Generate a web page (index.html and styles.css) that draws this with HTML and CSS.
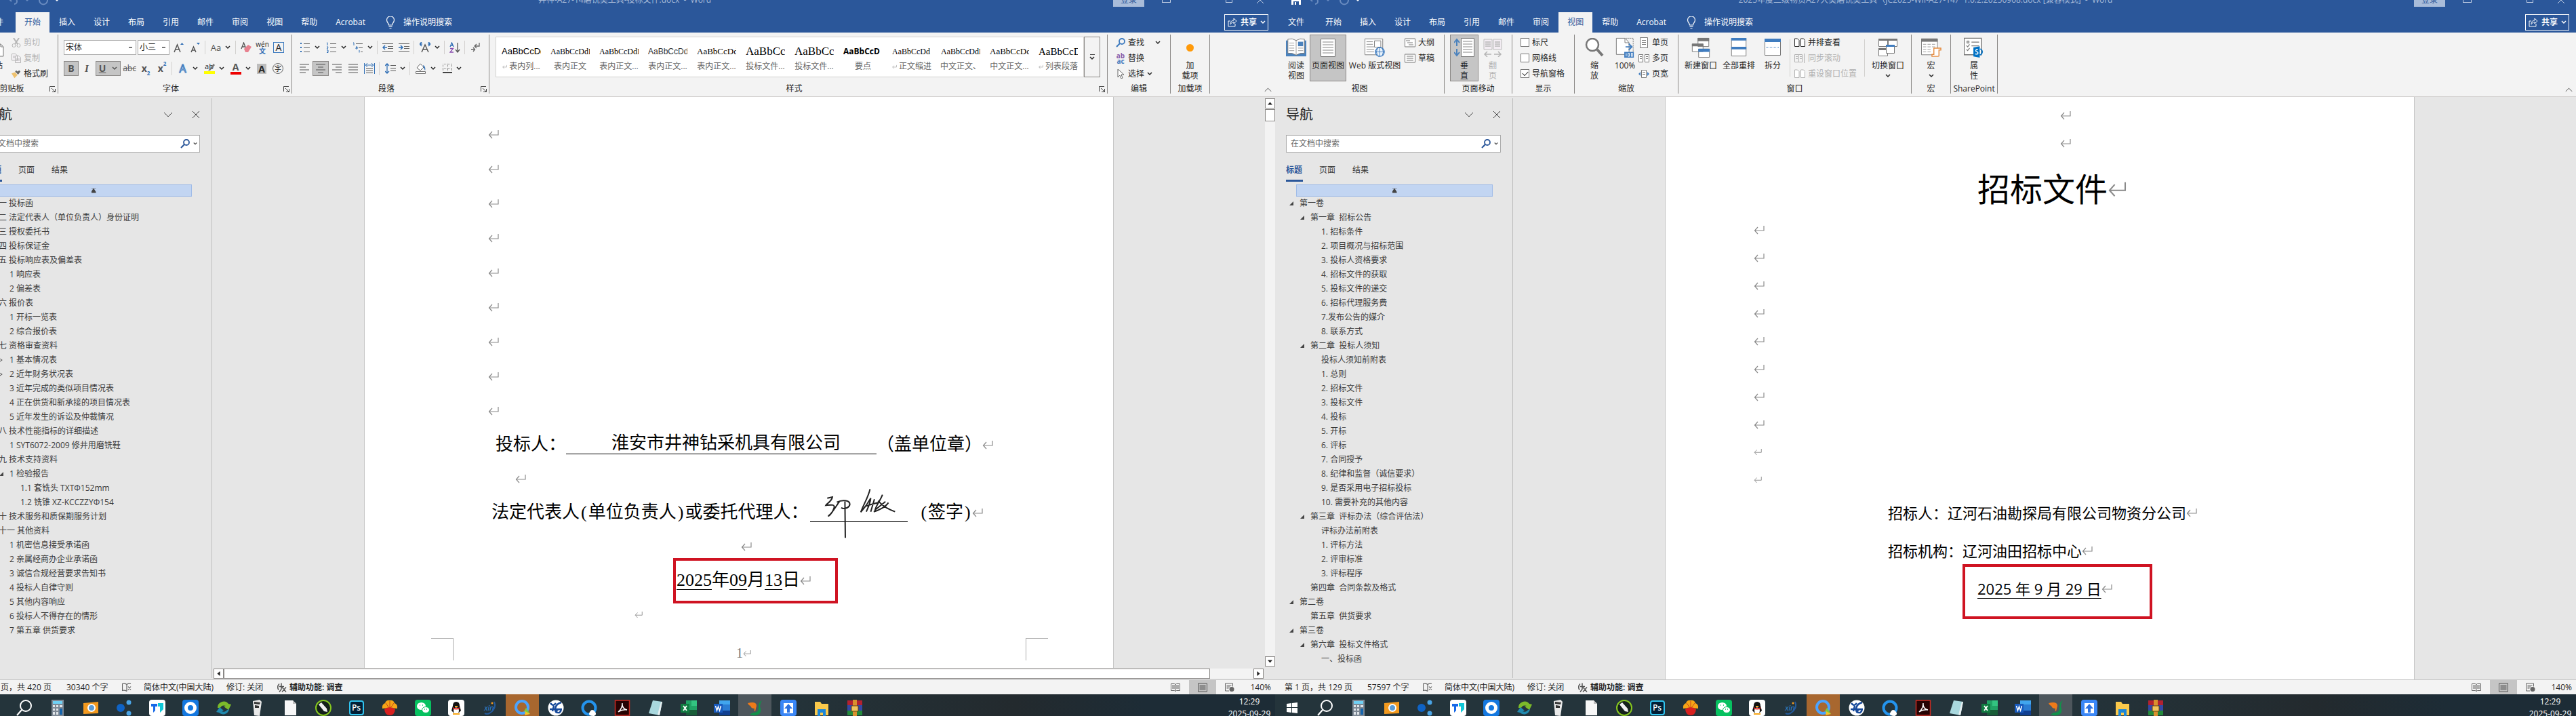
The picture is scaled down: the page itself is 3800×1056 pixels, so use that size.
FILE: index.html
```html
<!DOCTYPE html>
<html lang="zh-CN">
<head>
<meta charset="utf-8">
<title>Word</title>
<link rel="stylesheet" href="styles.css">
</head>
<body>
<svg class="defs" aria-hidden="true">
<symbol id="ret" viewBox="0 0 16 14"><path d="M15 1v7H2M6 3L1.500 8 6 13" fill="none" stroke="#8a8a8a" stroke-width="1.200"/></symbol>
<symbol id="caret" viewBox="0 0 8 6"><path d="M1 1l3 3 3-3" fill="none" stroke="currentColor" stroke-width="1.500"/></symbol>
<symbol id="chev" viewBox="0 0 14 8"><path d="M1 1l6 6 6-6" fill="none" stroke="currentColor"/></symbol>
<symbol id="close" viewBox="0 0 12 12"><path d="M1 1l10 10M11 1L1 11" fill="none" stroke="currentColor"/></symbol>
<symbol id="launch" viewBox="0 0 9 9"><path d="M.5 8V.5H8M3 3l5 5M8.500 4v4.500H4" fill="none" stroke="#444"/></symbol>
<symbol id="undo" viewBox="0 0 16 14"><path d="M2 5h7a4 4 0 0 1 0 8M5 1L1 5l4 4" fill="none" stroke="currentColor" stroke-width="2"/></symbol>
<symbol id="redo" viewBox="0 0 16 14"><path d="M12 3a6 6 0 1 1-8 0" fill="none" stroke="currentColor" stroke-width="2"/></symbol>
<symbol id="save" viewBox="0 0 14 14"><path d="M0 0h14v14H0z" fill="#fff"/><path d="M3 1h8v5H3zM3 9h8v5H3z" fill="#2b579a"/><path d="M5 10h2v4H5z" fill="#fff"/></symbol>
<symbol id="bulb" viewBox="0 0 14 18"><path d="M4.500 13c0-3-3-4-3-7.500a5.500 5.500 0 0 1 11 0C12.500 9 9.500 10 9.500 13zM4.500 15.500h5M5.500 17.500h3" fill="none" stroke="#fff" stroke-width="1.200"/></symbol>
<symbol id="share" viewBox="0 0 14 14"><path d="M4 5H1v8h10V9M4 10c0-4 2-6 5-6V1l4 4-4 4V6.500C7 6.500 5 8 4 10z" fill="none" stroke="#fff"/></symbol>
<symbol id="mag" viewBox="0 0 14 14"><circle cx="9" cy="5" r="4" fill="none" stroke="currentColor" stroke-width="1.800"/><path d="M6 8l-5 5" stroke="currentColor" stroke-width="2.200"/></symbol>
<symbol id="paste" viewBox="0 0 30 30"><path d="M1 3h21v22H1z" fill="#efc26f"/><path d="M7 1h9v5H7z" fill="#777"/><path d="M13 10h11l4 4v14H13z" fill="#fff" stroke="#777"/><path d="M24 10v4h4" fill="none" stroke="#777"/></symbol>
<symbol id="cut" viewBox="0 0 14 14"><path d="M3 0l6 9M11 0L5 9" stroke="#b5b5b5" stroke-width="2"/><circle cx="3.500" cy="11" r="2.500" fill="none" stroke="#b5b5b5"/><circle cx="10.500" cy="11" r="2.500" fill="none" stroke="#b5b5b5"/></symbol>
<symbol id="copy" viewBox="0 0 14 14"><path d="M.5.5H6L8.500 3v7h-8zM5.500 3.500H11L13.500 6v7.500h-8z" fill="#f6f3f6" stroke="#b5b5b5"/><path d="M2 4h3M2 6h3M7 8h5M7 10h5" stroke="#b5b5b5"/></symbol>
<symbol id="brush" viewBox="0 0 16 14"><path d="M0 6l6-2 4 5-5 5z" fill="#efc26f"/><path d="M6 3l5 5 1.500-1.500L15 3l-2-2-3 2L8 1z" fill="#666"/></symbol>
<symbol id="grow" viewBox="0 0 16 16"><path d="M1 15L5.500 4 10 15M3 11h5" fill="none" stroke="#555" stroke-width="1.500"/><path d="M10 4l2.500-3L15 4z" fill="#2f6eb5"/></symbol>
<symbol id="shrink" viewBox="0 0 16 16"><path d="M2 15L5.500 7 9 15M3.500 12h4" fill="none" stroke="#555" stroke-width="1.500"/><path d="M10 1l2.500 3L15 1z" fill="#2f6eb5"/></symbol>
<symbol id="erase" viewBox="0 0 16 16"><path d="M1 10L4.500 1 8 10M2 7h5" fill="none" stroke="#555" stroke-width="1.300"/><path d="M5 10l6-6 5 3-5 8H7z" fill="#e8818f"/></symbol>
<symbol id="bul" viewBox="0 0 16 16"><path d="M1 1h2v2H1zM1 7h2v2H1zM1 13h2v2H1z" fill="#2f6eb5"/><path d="M6 2.500h9M6 8.500h9M6 14.500h9" stroke="#666"/></symbol>
<symbol id="num" viewBox="0 0 16 16"><path d="M1 1h1v4M1 7h2v1L1 10h2M1 12h2v3.500H1M2 14h1" fill="none" stroke="#2f6eb5"/><path d="M6 2.500h9M6 8.500h9M6 14.500h9" stroke="#666"/></symbol>
<symbol id="multi" viewBox="0 0 16 16"><path d="M1 1h1v4M5 7h2v3H5V8.500h2M10 12v3.500" fill="none" stroke="#2f6eb5"/><path d="M5 2.500h10M9 8.500h6M12 14.500h3" stroke="#666"/></symbol>
<symbol id="outd" viewBox="0 0 16 14"><path d="M0 1.500h16M8 5.500h8M8 8.500h8M0 12.500h16" stroke="#666"/><path d="M7 7H1M4 4L1 7l3 3" fill="none" stroke="#2f6eb5" stroke-width="1.500"/></symbol>
<symbol id="ind" viewBox="0 0 16 14"><path d="M0 1.500h16M8 5.500h8M8 8.500h8M0 12.500h16" stroke="#666"/><path d="M0 7h6M3 4l3 3-3 3" fill="none" stroke="#2f6eb5" stroke-width="1.500"/></symbol>
<symbol id="acs" viewBox="0 0 16 16"><path d="M3 15L8 4l5 11M5 11h6" fill="none" stroke="#555" stroke-width="1.500"/><path d="M3 0L0 3l3 3M13 0l3 3-3 3M0 3h4M12 3h4" fill="none" stroke="#2f6eb5" stroke-width="1.500"/></symbol>
<symbol id="sort" viewBox="0 0 16 16"><path d="M1 7l2.500-6L6 7M2 5h3" fill="none" stroke="#2f6eb5" stroke-width="1.300"/><path d="M1 9.500h4.500L1 15h5" fill="none" stroke="#8a4fb0" stroke-width="1.300"/><path d="M12 1v13M9 11l3 4 3-4" fill="none" stroke="#555" stroke-width="1.300"/></symbol>
<symbol id="marks" viewBox="0 0 14 14"><path d="M13 0v5H7M9 2L6 5l3 3M1 10h5M4 7l2.500 3L4 13" fill="none" stroke="#666" stroke-width="1.300"/></symbol>
<symbol id="al" viewBox="0 0 16 13"><path d="M1 .5h14M1 4.500h9M1 8.500h14M1 12.500h9" stroke="#555"/></symbol>
<symbol id="ac" viewBox="0 0 16 13"><path d="M1 .5h14M4 4.500h8M1 8.500h14M4 12.500h8" stroke="#555"/></symbol>
<symbol id="ar" viewBox="0 0 16 13"><path d="M1 .5h14M6 4.500h9M1 8.500h14M6 12.500h9" stroke="#555"/></symbol>
<symbol id="aj" viewBox="0 0 16 13"><path d="M1 .5h14M1 4.500h14M1 8.500h14M1 12.500h14" stroke="#555"/></symbol>
<symbol id="ad" viewBox="0 0 16 16"><path d="M.5 0v16M15.500 0v16M2 3h12M5 0L2 3l3 3M11 0l3 3-3 3" fill="none" stroke="#2f6eb5"/><path d="M3 8.500h10M3 11.500h10M3 14.500h10" stroke="#555"/></symbol>
<symbol id="ls" viewBox="0 0 16 16"><path d="M3 1v14M0 4l3-3 3 3M0 12l3 3 3-3" fill="none" stroke="#2f6eb5" stroke-width="1.300"/><path d="M8 3.500h8M8 7.500h8M8 11.500h8" stroke="#555"/></symbol>
<symbol id="fill" viewBox="0 0 16 16"><path d="M7 1L2 7l5 4 5-5-5-5z" fill="#fff" stroke="#666"/><path d="M11 3c3 1 4 5 3 8l-2-4z" fill="#3f7cbf"/><path d="M.5 12.500h14v3H.5z" fill="#fff" stroke="#777"/></symbol>
<symbol id="bord" viewBox="0 0 14 14"><path d="M.5 0v13M7.500 0v13M13.500 0v13M0 .5h14M0 7.500h14" stroke="#888" stroke-dasharray="1 1"/><path d="M0 13h14" stroke="#444" stroke-width="2"/></symbol>
<symbol id="hil" viewBox="0 0 16 16"><path d="M6 11L14 1l2 2-7 8z" fill="#777"/><path d="M0 12h16v4H0z" fill="#ff0"/></symbol>
<symbol id="cursor" viewBox="0 0 14 14"><path d="M3 0v12l3-3 2 5 2-1-2-5h4z" fill="#fff" stroke="#666"/></symbol>
<symbol id="v-read" viewBox="0 0 32 28"><path d="M0 3h32v25H0z" fill="#4a82bd"/><path d="M3 1q7-2 13 2 6-4 13-2v22q-7-1-13 3-6-4-13-3z" fill="#fff" stroke="#777"/><path d="M16 3v22M5 7h8M5 11h8M5 15h8M5 19h8M19 15h8M19 19h8" stroke="#999"/><path d="M19 5h8v7h-8z" fill="#4a82bd"/></symbol>
<symbol id="v-page" viewBox="0 0 22 28"><path d="M.5 1.500h21v26H.5z" fill="#fff" stroke="#777"/><path d="M3 6h16M3 10h16M3 14h16M3 18h16M3 22h16" stroke="#888"/></symbol>
<symbol id="v-web" viewBox="0 0 32 30"><path d="M.5 1.500h28v25H.5z" fill="#fff" stroke="#777"/><path d="M3 6h10M3 10h10M3 14h12M3 18h12M3 22h12" stroke="#888"/><path d="M15.500 4.500h10v10h-10z" fill="#fff" stroke="#777"/><circle cx="24" cy="22" r="7" fill="#eaf3fb" stroke="#3f7cbf" stroke-width="1.500"/><path d="M17 22h14M24 15v14M20 17q-3 5 0 10M28 17q3 5 0 10" fill="none" stroke="#3f7cbf"/></symbol>
<symbol id="v-out" viewBox="0 0 16 13"><path d="M.5.5h15v12H.5z" fill="#fff" stroke="#777"/><path d="M2 3.500h6M4 6.500h8M6 9.500h7" stroke="#777"/></symbol>
<symbol id="v-draft" viewBox="0 0 16 13"><path d="M.5.5h15v12H.5z" fill="#fff" stroke="#777"/><path d="M3 3.500h10M3 6.500h10M3 9.500h10" stroke="#777"/></symbol>
<symbol id="v-vert" viewBox="0 0 30 28"><path d="M10.500.5h19v27h-19z" fill="#fff" stroke="#777"/><path d="M13 5h14M13 9h14M13 13h14M13 17h14M13 21h14" stroke="#888"/><path d="M4 12V3M0 7l4-5 4 5M4 16v9M0 21l4 5 4-5" fill="none" stroke="#4a82bd" stroke-width="2"/></symbol>
<symbol id="v-side" viewBox="0 0 28 28"><path d="M1 2h12v15H1zM15 2h12v15H15z" fill="#f3edf3" stroke="#bbb"/><path d="M3 6h8M3 9h8M3 12h8M17 6h8M17 9h8M17 12h8M2 24h10M16 24h10M6 20l-4 4 4 4M22 20l4 4-4 4" fill="none" stroke="#b5b5b5" stroke-width="1.500"/></symbol>
<symbol id="v-zoom" viewBox="0 0 28 28"><circle cx="11" cy="10" r="9" fill="#fff" stroke="#777" stroke-width="2.500"/><path d="M18 17l8 9" stroke="#777" stroke-width="4"/></symbol>
<symbol id="v-100" viewBox="0 0 28 32"><path d="M.5 1.500h14l6 7V27H.5z" fill="#fff" stroke="#777"/><path d="M14 1.500v7h6" fill="none" stroke="#777"/><path d="M16 1.500h11v22" fill="none" stroke="#777" stroke-dasharray="2 1"/><path d="M15 15h10M20 10l5 5-5 5" fill="none" stroke="#3f7cbf" stroke-width="2"/><path d="M13 23h15v9H13z" fill="#3f7cbf"/><path d="M16 25v5M19 25h2v5h-2zM24 25h2v5h-2z" fill="none" stroke="#fff"/></symbol>
<symbol id="v-one" viewBox="0 0 16 16"><path d="M2.500.5h11v15h-11z" fill="#fff" stroke="#777"/><path d="M5 4.500h6M5 7.500h6M5 10.500h6" stroke="#777"/></symbol>
<symbol id="v-many" viewBox="0 0 16 12"><path d="M.5.500h6v11h-6zM9.500.500h6v11h-6z" fill="#fff" stroke="#777"/><path d="M2 3.500h3M2 6.500h3M11 3.500h3M11 6.500h3" stroke="#777"/></symbol>
<symbol id="v-width" viewBox="0 0 16 12"><path d="M4.500.5h7v11h-7z" fill="#fff" stroke="#777"/><path d="M6 3.500h4M6 6.500h4" stroke="#777"/><path d="M3 3v6L0 6zM13 3v6l3-3z" fill="#3f7cbf"/></symbol>
<symbol id="v-new" viewBox="0 0 28 32"><path d="M9.500 1.500h17v13h-17zM.5 10.500h17v12H.5zM10.500 18.500h17v13h-17z" fill="#fff" stroke="#777"/><path d="M9 1h18v5H9zM0 10h18v4H0z" fill="#777"/><path d="M10 18h18v5H10z" fill="#3f7cbf"/></symbol>
<symbol id="v-all" viewBox="0 0 24 30"><path d="M.5.5h23v28H.5z" fill="#fff" stroke="#777"/><path d="M0 0h24v4H0zM0 14h24v4H0z" fill="#3f7cbf"/></symbol>
<symbol id="v-split" viewBox="0 0 24 26"><path d="M.5.5h23v24H.5z" fill="#fff" stroke="#777"/><path d="M0 0h24v5H0z" fill="#3f7cbf"/><path d="M2 13h20" stroke="#3f7cbf" stroke-dasharray="1 1"/></symbol>
<symbol id="v-side2" viewBox="0 0 16 13"><path d="M.5.5h4L7 3v9H.5zM9.500.5h4L15.500 3v9h-6z" fill="#fff" stroke="currentColor"/></symbol>
<symbol id="v-sync" viewBox="0 0 16 14"><path d="M.5 1.500h6v11h-6zM6.500 1.500h5v11h-5M14.500 0v14" fill="none" stroke="currentColor"/><path d="M2 4.500h3M2 7.500h3M8 4.500h3M8 7.500h3" stroke="currentColor"/></symbol>
<symbol id="v-sw" viewBox="0 0 28 28"><path d="M.5 1.500h13v11H.5zM14.500 1.500h13v11h-13zM.5 15.500h13v11H.5z" fill="#fff" stroke="#777"/><path d="M0 1h28v3H0zM0 15h13v3H0z" fill="#777"/><path d="M11.500 10.500h12v12h-12z" fill="#fff" stroke="#777"/><path d="M11 10h13v3H11z" fill="#3f7cbf"/></symbol>
<symbol id="v-macro" viewBox="0 0 32 30"><path d="M.5 1.500h25v25H.5z" fill="#fff" stroke="#777"/><path d="M0 1h26v5H0z" fill="#777"/><path d="M3 10h20M3 14h20M3 18h14M3 22h14" stroke="#999" stroke-dasharray="5 2"/><path d="M20 16h11v3h-3v9q0 1-2 1H17v-3h3z" fill="#fff" stroke="#e58b3e" stroke-width="1.500"/></symbol>
<symbol id="v-sp" viewBox="0 0 32 32"><path d="M.5 1.500h27v26H.5z" fill="#fff" stroke="#777" stroke-width="1.500"/><path d="M5 6h3v3H5zM12 7.500h12M12 13.500h12M4 13l2 2 3-4M4 19l2 2 3-4" fill="none" stroke="#777" stroke-width="1.300"/><path d="M15 16l10-2v18l-10-2z" fill="#0072c6"/><path d="M26 18q6 5 0 10" fill="none" stroke="#0072c6" stroke-width="2"/><path d="M22 19q-4 0-3 3 4 1 3 4-2 1-4 0" fill="none" stroke="#fff" stroke-width="1.500"/></symbol>
<symbol id="book" viewBox="0 0 14 13"><path d="M7 2v10M7 2Q4 0 .5 1v10Q4 10 7 12M7 2q3-2 6-1M9 5l4 5M13 5l-4 5" fill="none" stroke="#666" stroke-width="1.200"/></symbol>
<symbol id="acc" viewBox="0 0 16 15"><path d="M4 2Q0 6 3 11M7 1v9L4 14M4 6h7M8 7l6 7M14 7l-6 7" fill="none" stroke="#555" stroke-width="1.500"/></symbol>
<symbol id="s-read" viewBox="0 0 14 13"><path d="M7 2v10M.5 1h5L7 2l1.500-1h5v10h-5L7 12l-1.500-1h-5zM2 3.500h4M2 5.500h4M2 7.500h4M8 3.500h4M8 5.500h4M8 7.500h4" fill="none" stroke="#666"/></symbol>
<symbol id="s-page" viewBox="0 0 14 13"><path d="M.5.5h13v12H.5zM2.500 3.500h9M2.500 5.500h9M2.500 7.500h9M2.500 9.500h9" fill="none" stroke="#555"/></symbol>
<symbol id="s-web" viewBox="0 0 14 13"><path d="M6 11.500H.5V.5h11V5M2.500 3.500h7M2.500 5.500h5M2.500 7.500h3" fill="none" stroke="#666"/><circle cx="10" cy="9" r="3.500" fill="#666"/></symbol>
<symbol id="t-win" viewBox="0 0 24 24"><path d="M4 6l7-1v6H4zM12 5l8-1v7h-8zM4 12h7v7l-7-1zM12 12h8v8l-8-1z" fill="#fff"/></symbol>
<symbol id="t-mag" viewBox="0 0 24 24"><circle cx="14" cy="9" r="8" fill="none" stroke="#fff" stroke-width="2"/><path d="M8 15l-7 8" stroke="#fff" stroke-width="2"/></symbol>
<symbol id="t-calc" viewBox="0 0 24 24"><path d="M3 0h18v24H3z" fill="#7d8894"/><path d="M5 2h14v4H5z" fill="#6fd0f4"/><path d="M5 8h3v3H5zM10 8h3v3h-3zM15 8h4v3h-4zM5 13h3v3H5zM10 13h3v3h-3zM5 18h3v4H5zM10 18h3v4h-3z" fill="#dfe4e8"/><path d="M15 13h4v9h-4z" fill="#1565ad"/></symbol>
<symbol id="t-cam" viewBox="0 0 24 24"><path d="M1 5l22-2v17l-22 1z" fill="#f39a1f"/><circle cx="13" cy="12" r="6" fill="#fff"/><circle cx="13" cy="12" r="4" fill="#5b9bd5"/></symbol>
<symbol id="t-dots" viewBox="0 0 24 24"><circle cx="7" cy="12" r="6" fill="#0f63c5"/><circle cx="19" cy="4" r="3.500" fill="#4aa4e6"/><circle cx="19" cy="20" r="3.500" fill="#4aa4e6"/></symbol>
<symbol id="t-dd" viewBox="0 0 24 24"><rect width="24" height="24" rx="4" fill="#fff"/><path d="M3 6h9v4H9v6l-3 3V10H3z" fill="#1668e8"/><path d="M13 5h8v9l-5 5v-9h-3z" fill="#10c7d8"/></symbol>
<symbol id="t-blue" viewBox="0 0 24 24"><rect width="24" height="24" rx="4" fill="#1478e0"/><circle cx="12" cy="12" r="6.500" fill="none" stroke="#fff" stroke-width="5"/><path d="M12 9l2 3-2 3-2-3z" fill="#1478e0"/></symbol>
<symbol id="t-sync" viewBox="0 0 24 24"><path d="M3 12a9 9 0 0 1 16-6l4 1-4 8-7-5 3-1a6 6 0 0 0-8 3z" fill="#7cba2a"/><path d="M20 14a9 9 0 0 1-15 5l-4-1 5-7 6 5-3 1a6 6 0 0 0 8-2z" fill="#2189ae"/></symbol>
<symbol id="t-tower" viewBox="0 0 24 24"><path d="M6 2l10-2 3 3-3 21-8-1z" fill="#e9e9e9"/><path d="M8 3l9 1-1 3-8-1zM9 8l6 1v3H9z" fill="#333"/></symbol>
<symbol id="t-file" viewBox="0 0 24 24"><path d="M4 1h12l5 5v17H4z" fill="#f7f7f7"/><path d="M16 1v5h5" fill="#bbb"/></symbol>
<symbol id="t-pen" viewBox="0 0 24 24"><circle cx="12" cy="12" r="11" fill="#14201a" stroke="#86c81f" stroke-width="2"/><path d="M5 7l4-3 8 9 1 5-5-1z" fill="#f0f0f0"/></symbol>
<symbol id="t-sun" viewBox="0 0 24 24"><path d="M12 12L1 13Q0 7 5 5q2-5 7-4 5-1 7 4 5 2 4 8z" fill="#f6a516"/><path d="M4 14q8-6 16 0-1 9-8 9t-8-9z" fill="#d8201f"/><path d="M12 2v9M6 5l5 7M18 5l-5 7" stroke="#c8441c"/></symbol>
<symbol id="t-wx" viewBox="0 0 24 24"><rect width="24" height="24" rx="4" fill="#07c160"/><ellipse cx="9.500" cy="9.500" rx="6.500" ry="5.500" fill="#fff"/><ellipse cx="16" cy="15" rx="5.500" ry="4.500" fill="#fff" stroke="#07c160"/><path d="M7 8h1M11 8h1M14 14h1M17 14h1" stroke="#07c160" stroke-width="1.500"/></symbol>
<symbol id="t-qq" viewBox="0 0 24 24"><rect width="24" height="24" rx="4" fill="#fff"/><path d="M7 9q0-6 5-6t5 6l2 7-3 3H8l-3-3z" fill="#111"/><ellipse cx="12" cy="16" rx="4" ry="4.500" fill="#fff"/><path d="M7 11q5 3 10 0v2q-5 3-10 0z" fill="#e52420"/><path d="M7 20h10v2H7zM10 9h4v2h-4z" fill="#f6a516"/></symbol>
<symbol id="t-swirl" viewBox="0 0 24 24"><path d="M20 3q4 10-7 17-4 2-7 0" fill="none" stroke="#245a9c" stroke-width="2"/><circle cx="17" cy="5" r="1.500" fill="#f39a1f"/></symbol>
<symbol id="t-q" viewBox="0 0 24 24"><circle cx="11" cy="11" r="9" fill="none" stroke="#4ba3ff" stroke-width="4"/><path d="M17 12l6 9h-5l-4-4z" fill="#7ac943"/><path d="M16 17l7 4-8 2z" fill="#f7c325"/></symbol>
<symbol id="t-yg" viewBox="0 0 24 24"><circle cx="12" cy="12" r="11.500" fill="#fff"/><path d="M4 5q4 6 8 0M9 9l-2 8M20 4q-8 2-9 9t6 6q5-4 0-5-4 0-4 4M3 14h18" fill="none" stroke="#174a9b" stroke-width="2.500"/></symbol>
<symbol id="t-qb" viewBox="0 0 24 24"><circle cx="12" cy="12" r="9.500" fill="none" stroke="#2494ee" stroke-width="4"/><path d="M12 20q4-9 9-2 3 4-2 6-8 0-7-4z" fill="#fff"/></symbol>
<symbol id="t-pdf" viewBox="0 0 24 24"><rect x="1.500" y="1" width="21" height="22" fill="#260303" stroke="#c92a20" stroke-width="1.500"/><path d="M6 18q6-5 6-13-1 8 7 10-7-1-13 3z" fill="none" stroke="#fff" stroke-width="1.500"/></symbol>
<symbol id="t-note" viewBox="0 0 24 24"><path d="M8 1l14 2-4 20L2 20z" fill="#a9d8de"/><path d="M20 3l2 0-4 20-3-1z" fill="#e8eef0"/></symbol>
<symbol id="t-xls" viewBox="0 0 24 24"><path d="M8 1h16v22H8z" fill="#21a366"/><path d="M16 1h8v8h-8z" fill="#33c481"/><path d="M8 15h16v8H8z" fill="#185c37"/><path d="M0 6h13v13H0z" fill="#107c41"/><path d="M4 9l5 7M9 9l-5 7" stroke="#fff" stroke-width="1.800"/></symbol>
<symbol id="t-doc" viewBox="0 0 24 24"><path d="M8 1h16v22H8z" fill="#2b7cd3"/><path d="M8 1h16v6H8z" fill="#41a5ee"/><path d="M8 16h16v7H8z" fill="#103f91"/><path d="M0 6h13v13H0z" fill="#185abd"/><path d="M2.500 9l2 7 2-6 2 6 2-7" fill="none" stroke="#fff" stroke-width="1.500"/></symbol>
<symbol id="t-leaf" viewBox="0 0 24 24"><path d="M1 5q13-3 13 4l-2 8q-2 0-1-4-5 0-6-4-3-1-4-4z" fill="#ee7a1a"/><path d="M22 1q-6 3-5 11 0 7-7 7-3 0-6 3 8 3 14-1 4-4 1-11 0-5 3-9z" fill="#12914a"/></symbol>
<symbol id="t-up" viewBox="0 0 24 24"><rect width="24" height="24" rx="4" fill="#3b87f6"/><path d="M5 5h14v15H5z" fill="#fff"/><path d="M12 6l6 7h-4v6h-4v-6H6z" fill="#2c71e0"/></symbol>
<symbol id="t-dir" viewBox="0 0 24 24"><path d="M2 3h8l2 3h10v17H2z" fill="#fbc94b"/><path d="M6 14h12v10h-4v-5h-4v5H6z" fill="#1c86d8"/></symbol>
<symbol id="t-rar" viewBox="0 0 24 24"><path d="M1 1h22v7H1z" fill="#b32130"/><path d="M1 8h22v8H1z" fill="#3647a4"/><path d="M1 16h22v7H1z" fill="#228a3a"/><path d="M9 0h6v24H9z" fill="#d9902e"/><path d="M7 9h10v8H7z" fill="#efc55c" stroke="#6d4210"/></symbol>
</svg>

<div class="desktop">
<section class="window">
<header class="titlebar">
<div class="quick"><button aria-label="保存"><svg class="i14"><use href="#save"/></svg></button><button class="dim" aria-label="撤消"><svg class="i16"><use href="#undo"/></svg></button><svg class="car dim"><use href="#caret"/></svg><button class="dim" aria-label="重复"><svg class="i16"><use href="#redo"/></svg></button><svg class="car"><use href="#caret"/></svg></div>
<h1>井神-A27-14磨铣类工具-投标文件.docx&nbsp; -&nbsp; Word</h1>
<div class="caption"><button class="login">登录</button><button class="wopt" aria-label="功能区显示选项"></button><button class="wrest" aria-label="还原"></button><button aria-label="关闭"><svg class="i12"><use href="#close"/></svg></button></div>
</header>
<nav class="tabs">
<button class="file">文件</button><button class="on">开始</button><button>插入</button><button>设计</button><button>布局</button><button>引用</button><button>邮件</button><button>审阅</button><button>视图</button><button>帮助</button><button>Acrobat</button><button class="tell"><svg><use href="#bulb"/></svg>操作说明搜索</button>
<button class="share"><svg class="i14"><use href="#share"/></svg>共享<svg class="car"><use href="#caret"/></svg></button>
</nav>
<div class="ribbon">
<div class="group clip"><div class="gbody"><button class="big w40"><span class="pic"><svg class="i30"><use href="#paste"/></svg></span><span>粘贴</span></button><div class="stack"><button class="off"><svg class="i14"><use href="#cut"/></svg>剪切</button><button class="off"><svg class="i14"><use href="#copy"/></svg>复制</button><button><svg class="i14"><use href="#brush"/></svg>格式刷</button></div></div><div class="glabel"><span>剪贴板</span><svg><use href="#launch"/></svg></div></div>
<div class="group font"><div class="gbody rows">
<div class="row"><select class="fname" aria-label="字体"><option>宋体</option></select><select class="fsize" aria-label="字号"><option>小三</option></select><button><svg class="i16"><use href="#grow"/></svg></button><button><svg class="i16"><use href="#shrink"/></svg></button><i class="sep"></i><button class="split"><span class="aa">Aa</span><svg class="car"><use href="#caret"/></svg></button><i class="sep"></i><button><svg class="i16"><use href="#erase"/></svg></button><button class="wen"><span>wén</span><b>文</b></button><button><span class="boxa">A</span></button></div>
<div class="row"><button class="press b">B</button><button class="it">I</button><button class="split press u"><u>U</u><svg class="car"><use href="#caret"/></svg></button><button class="st"><s>abc</s></button><button class="b">x<sub>2</sub></button><button class="b">x<sup>2</sup></button><i class="sep"></i><button class="split"><span class="glow">A</span><svg class="car"><use href="#caret"/></svg></button><button class="split"><span class="hl">ab<svg class="i16"><use href="#hil"/></svg></span><svg class="car"><use href="#caret"/></svg></button><button class="split"><span class="reda">A</span><svg class="car"><use href="#caret"/></svg></button><button><span class="shade">A</span></button><button><span class="circ">字</span></button></div>
</div><div class="glabel"><span>字体</span><svg><use href="#launch"/></svg></div></div>
<div class="group para"><div class="gbody rows">
<div class="row"><button class="split"><svg class="i16"><use href="#bul"/></svg><svg class="car"><use href="#caret"/></svg></button><button class="split"><svg class="i16"><use href="#num"/></svg><svg class="car"><use href="#caret"/></svg></button><button class="split"><svg class="i16"><use href="#multi"/></svg><svg class="car"><use href="#caret"/></svg></button><i class="sep"></i><button><svg class="i16"><use href="#outd"/></svg></button><button><svg class="i16"><use href="#ind"/></svg></button><i class="sep"></i><button class="split"><svg class="i16"><use href="#acs"/></svg><svg class="car"><use href="#caret"/></svg></button><i class="sep"></i><button><svg class="i16"><use href="#sort"/></svg></button><i class="sep"></i><button><svg class="i14"><use href="#marks"/></svg></button></div>
<div class="row"><button><svg class="i16"><use href="#al"/></svg></button><button class="press"><svg class="i16"><use href="#ac"/></svg></button><button><svg class="i16"><use href="#ar"/></svg></button><button><svg class="i16"><use href="#aj"/></svg></button><button><svg class="i16"><use href="#ad"/></svg></button><i class="sep"></i><button class="split"><svg class="i16"><use href="#ls"/></svg><svg class="car"><use href="#caret"/></svg></button><i class="sep"></i><button class="split"><svg class="i16"><use href="#fill"/></svg><svg class="car"><use href="#caret"/></svg></button><button class="split"><svg class="i14"><use href="#bord"/></svg><svg class="car"><use href="#caret"/></svg></button></div>
</div><div class="glabel"><span>段落</span><svg><use href="#launch"/></svg></div></div>
<div class="group styles"><div class="gbody"><div class="gallery">
<button><span class="smp sans">AaBbCcDd</span><small><svg class="mini"><use href="#ret"/></svg>表内列...</small></button>
<button><span class="smp song">AaBbCcDdE</span><small>表内正文</small></button>
<button><span class="smp song">AaBbCcDdE</span><small>表内正文...</small></button>
<button><span class="smp lite">AaBbCcDd</span><small>表内正文...</small></button>
<button><span class="smp times">AaBbCcDd</span><small>表内正文...</small></button>
<button><span class="smp large">AaBbCc</span><small>投标文件...</small></button>
<button><span class="smp large">AaBbCc</span><small>投标文件...</small></button>
<button><span class="smp heavy">AaBbCcD</span><small>要点</small></button>
<button><span class="smp song">AaBbCcDd</span><small><svg class="mini"><use href="#ret"/></svg>正文缩进</small></button>
<button><span class="smp song">AaBbCcDdE</span><small>中文正文、</small></button>
<button><span class="smp times">AaBbCcDd</span><small>中文正文...</small></button>
<button><span class="smp mid">AaBbCcD</span><small><svg class="mini"><use href="#ret"/></svg>列表段落</small></button>
</div><button class="more" aria-label="其他"><i></i><svg class="car"><use href="#caret"/></svg></button></div><div class="glabel"><span>样式</span><svg><use href="#launch"/></svg></div></div>
<div class="group edit"><div class="gbody"><div class="stack"><button class="far"><svg class="i14 blue"><use href="#mag"/></svg>查找<svg class="car"><use href="#caret"/></svg></button><button><span class="abac"><b>ab</b><b>ac</b></span>替换</button><button><svg class="i14"><use href="#cursor"/></svg>选择<svg class="car"><use href="#caret"/></svg></button></div></div><div class="glabel"><span>编辑</span></div></div>
<div class="group"><div class="gbody"><button class="big w57"><span class="pic"><i class="dot"></i></span><span>加<br>载项</span></button></div><div class="glabel"><span>加载项</span></div></div>
<button class="collapse" aria-label="折叠功能区"><svg><use href="#chev"/></svg></button>
</div>
<div class="work">
<aside class="nav">
<div class="navhead"><h2>导航</h2><button><svg class="chev"><use href="#chev"/></svg></button><button><svg class="i12"><use href="#close"/></svg></button></div>
<div class="search"><input type="text" placeholder="在文档中搜索" aria-label="在文档中搜索"><svg class="i14"><use href="#mag"/></svg><svg class="car"><use href="#caret"/></svg></div>
<div class="navtabs"><button class="on">标题</button><button>页面</button><button>结果</button></div>
<button class="jump" aria-label="跳转到开头"><i></i></button>
<ul>
<li><a href="#">一 投标函</a></li>
<li><a href="#">二 法定代表人（单位负责人）身份证明</a></li>
<li><a href="#">三 授权委托书</a></li>
<li><a href="#">四 投标保证金</a></li>
<li><a href="#">五 投标响应表及偏差表</a></li>
<li class="l2"><a href="#">1 响应表</a></li>
<li class="l2"><a href="#">2 偏差表</a></li>
<li><a href="#">六 报价表</a></li>
<li class="l2"><a href="#">1 开标一览表</a></li>
<li class="l2"><a href="#">2 综合报价表</a></li>
<li><a href="#">七 资格审查资料</a></li>
<li class="l2 shut"><a href="#">1 基本情况表</a></li>
<li class="l2 shut"><a href="#">2 近年财务状况表</a></li>
<li class="l2"><a href="#">3 近年完成的类似项目情况表</a></li>
<li class="l2"><a href="#">4 正在供货和新承接的项目情况表</a></li>
<li class="l2"><a href="#">5 近年发生的诉讼及仲裁情况</a></li>
<li><a href="#">八 技术性能指标的详细描述</a></li>
<li class="l2"><a href="#">1 SYT6072-2009 修井用磨铣鞋</a></li>
<li><a href="#">九 技术支持资料</a></li>
<li class="l2 open"><a href="#">1 检验报告</a></li>
<li class="l3"><a href="#">1.1 套铣头 TXTΦ152mm</a></li>
<li class="l3"><a href="#">1.2 铣锥 XZ-KCCZZYΦ154</a></li>
<li><a href="#">十 技术服务和质保期服务计划</a></li>
<li><a href="#">十一 其他资料</a></li>
<li class="l2"><a href="#">1 机密信息接受承诺函</a></li>
<li class="l2"><a href="#">2 亲属经商办企业承诺函</a></li>
<li class="l2"><a href="#">3 诚信合规经营要求告知书</a></li>
<li class="l2"><a href="#">4 投标人自律守则</a></li>
<li class="l2"><a href="#">5 其他内容响应</a></li>
<li class="l2"><a href="#">6 投标人不得存在的情形</a></li>
<li class="l2"><a href="#">7 第五章 供货要求</a></li>
</ul>
</aside>
<div class="canvas">
<div class="view">
<article class="page bid">
<p><svg class="ret"><use href="#ret"/></svg></p><p><svg class="ret"><use href="#ret"/></svg></p><p><svg class="ret"><use href="#ret"/></svg></p><p><svg class="ret"><use href="#ret"/></svg></p><p><svg class="ret"><use href="#ret"/></svg></p><p><svg class="ret"><use href="#ret"/></svg></p><p><svg class="ret"><use href="#ret"/></svg></p><p><svg class="ret"><use href="#ret"/></svg></p><p><svg class="ret"><use href="#ret"/></svg></p>
<p class="t who">投标人：<span class="blank name">淮安市井神钻采机具有限公司</span>（盖单位章）<svg class="ret"><use href="#ret"/></svg></p>
<p class="t in2"><svg class="ret"><use href="#ret"/></svg></p>
<p class="t rep">法定代表人<em>(</em>单位负责人<em>)</em>或委托代理人：<span class="blank sign"><svg class="ink" viewBox="1003 360 230 240" preserveAspectRatio="none"><path d="M1022 410l14-5c-2 20-16 30-18 37 12-2 27-7 22 13-4 25-18 40-14 32 9-7 25-57 30-62M1048 428c17-13 37-8 35 12-3 15-17 20-23 12M1070 425l1 161M1138 370c-3 30-18 70-25 102 12-22 22-47 27-62-2 30-10 50-12 60M1126 445l34-15M1150 415l-10 55M1172 395c-7 30-17 45-20 67l28-37M1160 422c15 28 30 38 46 48M1188 430c-8 20-28 35-40 40"/></svg></span><em>(</em>签字<em>)</em><svg class="ret"><use href="#ret"/></svg></p>
<p class="t mid"><svg class="ret"><use href="#ret"/></svg></p>
<p class="t day"><span class="dated"><u>2025</u>年<u>09</u>月<u>13</u>日<i class="frame"></i></span><svg class="ret"><use href="#ret"/></svg></p>
<p class="t in3"><svg class="ret small"><use href="#ret"/></svg></p>
<footer><i class="corner lc"></i><span>1<svg class="ret small"><use href="#ret"/></svg></span><i class="corner rc"></i></footer>
</article>
</div>
<div class="hbar"><button class="le" aria-label="向左"></button><div class="thumb"></div><button class="ri" aria-label="向右"></button></div>
</div>
<div class="vbar"><button class="up" aria-label="向上"></button><div class="thumb"></div><button class="dn" aria-label="向下"></button></div>
</div>
<footer class="status"><span class="s1">第 1 页，共 420 页</span><span class="s2">30340 个字</span><svg class="i14 s3"><use href="#book"/></svg><span class="s4">简体中文(中国大陆)</span><span class="s5">修订: 关闭</span><svg class="i16"><use href="#acc"/></svg><span class="s6">辅助功能: 调查</span><button class="vw"><svg class="i14"><use href="#s-read"/></svg></button><button class="vw on"><svg class="i14"><use href="#s-page"/></svg></button><button class="vw"><svg class="i14"><use href="#s-web"/></svg></button><span class="zoom">140%</span></footer>
</section>
<div class="taskbar">
<button><svg><use href="#t-win"/></svg></button><button><svg><use href="#t-mag"/></svg></button><button><svg><use href="#t-calc"/></svg></button><button><svg><use href="#t-cam"/></svg></button><button><svg><use href="#t-dots"/></svg></button><button><svg><use href="#t-dd"/></svg></button><button><svg><use href="#t-blue"/></svg></button><button><svg><use href="#t-sync"/></svg></button><button><svg><use href="#t-tower"/></svg></button><button><svg><use href="#t-file"/></svg></button><button><svg><use href="#t-pen"/></svg></button><button><span class="ps">Ps</span></button><button><svg><use href="#t-sun"/></svg></button><button><svg><use href="#t-wx"/></svg></button><button><svg><use href="#t-qq"/></svg></button><button class="xin">xin<svg><use href="#t-swirl"/></svg></button><button class="hot"><svg><use href="#t-q"/></svg></button><button><svg><use href="#t-yg"/></svg></button><button><svg><use href="#t-qb"/></svg></button><button><svg><use href="#t-pdf"/></svg></button><button><svg><use href="#t-note"/></svg></button><button><svg><use href="#t-xls"/></svg></button><button><svg><use href="#t-doc"/></svg></button><button class="cur"><svg><use href="#t-leaf"/></svg></button><button><svg><use href="#t-up"/></svg></button><button><svg><use href="#t-dir"/></svg></button><button><svg><use href="#t-rar"/></svg></button>
<time>12:29<br>2025-09-29</time>
</div>
</div>

<div class="desktop">
<section class="window">
<header class="titlebar">
<div class="quick"><button aria-label="保存"><svg class="i14"><use href="#save"/></svg></button><button class="dim" aria-label="撤消"><svg class="i16"><use href="#undo"/></svg></button><svg class="car dim"><use href="#caret"/></svg><button class="dim" aria-label="重复"><svg class="i16"><use href="#redo"/></svg></button><svg class="car"><use href="#caret"/></svg></div>
<h1>2025年度二级物资A27大类磨铣类工具（JC2025-WII-A27-14）1.0.2.20250908.docx [兼容模式]&nbsp; -&nbsp; Word</h1>
<div class="caption"><button class="login">登录</button><button class="wopt" aria-label="功能区显示选项"></button><button class="wrest" aria-label="还原"></button><button aria-label="关闭"><svg class="i12"><use href="#close"/></svg></button></div>
</header>
<nav class="tabs">
<button class="file">文件</button><button>开始</button><button>插入</button><button>设计</button><button>布局</button><button>引用</button><button>邮件</button><button>审阅</button><button class="on">视图</button><button>帮助</button><button>Acrobat</button><button class="tell"><svg><use href="#bulb"/></svg>操作说明搜索</button>
<button class="share"><svg class="i14"><use href="#share"/></svg>共享<svg class="car"><use href="#caret"/></svg></button>
</nav>
<div class="ribbon">
<div class="group gview"><div class="gbody"><button class="big w40"><span class="pic"><svg class="i30"><use href="#v-read"/></svg></span><span>阅读<br>视图</span></button><button class="big press w54"><span class="pic"><svg class="i28"><use href="#v-page"/></svg></span><span>页面视图</span></button><button class="big w84"><span class="pic"><svg class="i30"><use href="#v-web"/></svg></span><span>Web 版式视图</span></button><div class="stack"><button><svg class="i16"><use href="#v-out"/></svg>大纲</button><button><svg class="i16"><use href="#v-draft"/></svg>草稿</button></div></div><div class="glabel"><span>视图</span></div></div>
<div class="group gmove"><div class="gbody"><button class="big press w42"><span class="pic"><svg class="i30"><use href="#v-vert"/></svg></span><span>垂<br>直</span></button><button class="big off w42"><span class="pic"><svg class="i28"><use href="#v-side"/></svg></span><span>翻<br>页</span></button></div><div class="glabel"><span>页面移动</span></div></div>
<div class="group gshow"><div class="gbody"><div class="stack"><label><input type="checkbox">标尺</label><label><input type="checkbox">网格线</label><label><input type="checkbox" checked>导航窗格</label></div></div><div class="glabel"><span>显示</span></div></div>
<div class="group gzoom"><div class="gbody"><button class="big w50"><span class="pic"><svg class="i28"><use href="#v-zoom"/></svg></span><span>缩<br>放</span></button><button class="big w40"><span class="pic"><svg class="i30"><use href="#v-100"/></svg></span><span>100%</span></button><div class="stack"><button><svg class="i16"><use href="#v-one"/></svg>单页</button><button><svg class="i16"><use href="#v-many"/></svg>多页</button><button><svg class="i16"><use href="#v-width"/></svg>页宽</button></div></div><div class="glabel"><span>缩放</span></div></div>
<div class="group gwin"><div class="gbody"><button class="big w56"><span class="pic"><svg class="i30"><use href="#v-new"/></svg></span><span>新建窗口</span></button><button class="big w56"><span class="pic"><svg class="i28"><use href="#v-all"/></svg></span><span>全部重排</span></button><button class="big w44"><span class="pic"><svg class="i24"><use href="#v-split"/></svg></span><span>拆分</span></button><i class="tall"></i><div class="stack"><button><svg class="i16"><use href="#v-side2"/></svg>并排查看</button><button class="off"><svg class="i16"><use href="#v-sync"/></svg>同步滚动</button><button class="off"><svg class="i16"><use href="#v-side2"/></svg>重设窗口位置</button></div><i class="tall"></i><button class="big w56"><span class="pic"><svg class="i28"><use href="#v-sw"/></svg></span><span>切换窗口</span><svg class="car"><use href="#caret"/></svg></button></div><div class="glabel"><span>窗口</span></div></div>
<div class="group"><div class="gbody"><button class="big w57"><span class="pic"><svg class="i30"><use href="#v-macro"/></svg></span><span>宏</span><svg class="car"><use href="#caret"/></svg></button></div><div class="glabel"><span>宏</span></div></div>
<div class="group"><div class="gbody"><button class="big w68"><span class="pic"><svg class="i30"><use href="#v-sp"/></svg></span><span>属<br>性</span></button></div><div class="glabel"><span>SharePoint</span></div></div>
<button class="collapse" aria-label="折叠功能区"><svg><use href="#chev"/></svg></button>
</div>
<div class="work">
<aside class="nav">
<div class="navhead"><h2>导航</h2><button><svg class="chev"><use href="#chev"/></svg></button><button><svg class="i12"><use href="#close"/></svg></button></div>
<div class="search"><input type="text" placeholder="在文档中搜索" aria-label="在文档中搜索"><svg class="i14"><use href="#mag"/></svg><svg class="car"><use href="#caret"/></svg></div>
<div class="navtabs"><button class="on">标题</button><button>页面</button><button>结果</button></div>
<button class="jump" aria-label="跳转到开头"><i></i></button>
<ul>
<li class="open"><a href="#">第一卷</a></li>
<li class="l2 open"><a href="#">第一章&nbsp; 招标公告</a></li>
<li class="l3"><a href="#">1. 招标条件</a></li>
<li class="l3"><a href="#">2. 项目概况与招标范围</a></li>
<li class="l3"><a href="#">3. 投标人资格要求</a></li>
<li class="l3"><a href="#">4. 招标文件的获取</a></li>
<li class="l3"><a href="#">5. 投标文件的递交</a></li>
<li class="l3"><a href="#">6. 招标代理服务费</a></li>
<li class="l3"><a href="#">7.发布公告的媒介</a></li>
<li class="l3"><a href="#">8. 联系方式</a></li>
<li class="l2 open"><a href="#">第二章&nbsp; 投标人须知</a></li>
<li class="l3"><a href="#">投标人须知前附表</a></li>
<li class="l3"><a href="#">1. 总则</a></li>
<li class="l3"><a href="#">2. 招标文件</a></li>
<li class="l3"><a href="#">3. 投标文件</a></li>
<li class="l3"><a href="#">4. 投标</a></li>
<li class="l3"><a href="#">5. 开标</a></li>
<li class="l3"><a href="#">6. 评标</a></li>
<li class="l3"><a href="#">7. 合同授予</a></li>
<li class="l3"><a href="#">8. 纪律和监督（诚信要求）</a></li>
<li class="l3"><a href="#">9. 是否采用电子招标投标</a></li>
<li class="l3"><a href="#">10. 需要补充的其他内容</a></li>
<li class="l2 open"><a href="#">第三章&nbsp; 评标办法（综合评估法）</a></li>
<li class="l3"><a href="#">评标办法前附表</a></li>
<li class="l3"><a href="#">1. 评标方法</a></li>
<li class="l3"><a href="#">2. 评审标准</a></li>
<li class="l3"><a href="#">3. 评标程序</a></li>
<li class="l2"><a href="#">第四章&nbsp; 合同条款及格式</a></li>
<li class="open"><a href="#">第二卷</a></li>
<li class="l2"><a href="#">第五章&nbsp; 供货要求</a></li>
<li class="open"><a href="#">第三卷</a></li>
<li class="l2 open"><a href="#">第六章&nbsp; 投标文件格式</a></li>
<li class="l3"><a href="#">一、投标函</a></li>
</ul>
</aside>
<div class="canvas">
<div class="view">
<article class="page tender">
<p class="mid"><svg class="ret"><use href="#ret"/></svg></p><p class="mid"><svg class="ret"><use href="#ret"/></svg></p>
<h3>招标文件<svg class="ret large"><use href="#ret"/></svg></h3>
<p><svg class="ret"><use href="#ret"/></svg></p><p><svg class="ret"><use href="#ret"/></svg></p><p><svg class="ret"><use href="#ret"/></svg></p><p><svg class="ret"><use href="#ret"/></svg></p><p><svg class="ret"><use href="#ret"/></svg></p><p><svg class="ret"><use href="#ret"/></svg></p><p><svg class="ret"><use href="#ret"/></svg></p><p><svg class="ret"><use href="#ret"/></svg></p><p><svg class="ret small"><use href="#ret"/></svg></p><p><svg class="ret small"><use href="#ret"/></svg></p>
<p class="t">招标人：辽河石油勘探局有限公司物资分公司<svg class="ret"><use href="#ret"/></svg></p>
<p class="t">招标机构：辽河油田招标中心<svg class="ret"><use href="#ret"/></svg></p>
<p class="t day"><span class="dated"><u>2025 年 9 月 29 日</u><i class="frame"></i></span><svg class="ret"><use href="#ret"/></svg></p>
</article>
</div>
</div>
<div class="gutter"></div>
</div>
<footer class="status"><span class="s1">第 1 页，共 129 页</span><span class="s2">57597 个字</span><svg class="i14 s3"><use href="#book"/></svg><span class="s4">简体中文(中国大陆)</span><span class="s5">修订: 关闭</span><svg class="i16"><use href="#acc"/></svg><span class="s6">辅助功能: 调查</span><button class="vw"><svg class="i14"><use href="#s-read"/></svg></button><button class="vw on"><svg class="i14"><use href="#s-page"/></svg></button><button class="vw"><svg class="i14"><use href="#s-web"/></svg></button><span class="zoom">140%</span></footer>
</section>
<div class="taskbar">
<button><svg><use href="#t-win"/></svg></button><button><svg><use href="#t-mag"/></svg></button><button><svg><use href="#t-calc"/></svg></button><button><svg><use href="#t-cam"/></svg></button><button><svg><use href="#t-dots"/></svg></button><button><svg><use href="#t-dd"/></svg></button><button><svg><use href="#t-blue"/></svg></button><button><svg><use href="#t-sync"/></svg></button><button><svg><use href="#t-tower"/></svg></button><button><svg><use href="#t-file"/></svg></button><button><svg><use href="#t-pen"/></svg></button><button><span class="ps">Ps</span></button><button><svg><use href="#t-sun"/></svg></button><button><svg><use href="#t-wx"/></svg></button><button><svg><use href="#t-qq"/></svg></button><button class="xin">xin<svg><use href="#t-swirl"/></svg></button><button class="hot"><svg><use href="#t-q"/></svg></button><button><svg><use href="#t-yg"/></svg></button><button><svg><use href="#t-qb"/></svg></button><button><svg><use href="#t-pdf"/></svg></button><button><svg><use href="#t-note"/></svg></button><button><svg><use href="#t-xls"/></svg></button><button><svg><use href="#t-doc"/></svg></button><button class="cur"><svg><use href="#t-leaf"/></svg></button><button><svg><use href="#t-up"/></svg></button><button><svg><use href="#t-dir"/></svg></button><button><svg><use href="#t-rar"/></svg></button>
<time>12:29<br>2025-09-29</time>
</div>
</div>
</body>
</html>
```
FILE: styles.css
```css
* { box-sizing: border-box; }
html, body { margin: 0; height: 100%; overflow: hidden; }
body {
  display: flex;
  font: 12px/16px "Open Sans", "Noto Sans CJK SC", sans-serif;
  color: #262626;
  background: #e6e6e6;
}
button, input, select { font: inherit; color: inherit; border: 0; padding: 0; margin: 0; background: none; border-radius: 0; }
button { white-space: nowrap; }
h1, h2, h3, p, ul { margin: 0; padding: 0; font-weight: 400; }
ul { list-style: none; }
a { color: inherit; text-decoration: none; }
svg { display: block; flex: none; }
.defs { position: absolute; width: 0; height: 0; }
.i12 { width: 12px; height: 12px; }
.i14 { width: 14px; height: 14px; }
.i16 { width: 16px; height: 16px; }
.i24 { width: 24px; height: 26px; }
.i28 { width: 28px; height: 28px; }
.i30 { width: 30px; height: 30px; }
.car { width: 8px; height: 6px; }
.blue { color: #3f7cbf; }

/* desktops run past the viewport on the top, left and bottom */
.desktop { flex: 1; min-width: 0; display: flex; flex-direction: column; height: calc(100vh + 26px); margin-top: -18px; }
.desktop:first-of-type { margin-left: -38px; }
.window { flex: 1; min-height: 0; display: flex; flex-direction: column; background: #e6e6e6; }

.titlebar { height: 36px; flex: none; display: grid; grid-template-columns: 1fr auto 1fr; align-items: center; background: #2b579a; color: #fff; }
.titlebar h1 { font-size: 12px; color: #a9bcd9; }
.quick { display: flex; align-items: center; gap: 12px; padding-left: 24px; }
.dim { color: #6a8cc0; }
.quick .dim + .car { margin-left: -4px; }
.caption { display: flex; align-items: center; justify-content: flex-end; padding-right: 16px; color: #c3d0e5; }
.login { width: 46px; height: 20px; background: #a9bcd9; color: #2b579a; margin-right: 26px; }
.wopt { width: 13px; height: 8px; border: 1px solid #c3d0e5; margin-right: 81px; }
.wrest { width: 10px; height: 8px; border: 1px solid #c3d0e5; margin-right: 35px; }

.tabs { height: 30px; flex: none; display: flex; gap: 1px; background: #2b579a; color: #fff; }
.tabs button { padding: 0 13px; }
.tabs .file { padding: 0 17px 0 19px; }
.tabs .on { background: #f3f3f3; color: #2b579a; }
.tabs .tell { display: flex; align-items: center; gap: 12px; padding-left: 16px; }
.tell svg { width: 14px; height: 18px; }
.tabs .share { margin: 3px 10px 3px auto; padding: 0 4px; width: 65px; flex: none; display: flex; align-items: center; gap: 5px; border: 1px solid #fff; font-weight: 600; }

.ribbon { height: 95px; flex: none; display: flex; padding: 3px 0 4px; background: #f3f3f3; border-bottom: 1px solid #d2d0ce; }
.group { display: flex; flex-direction: column; border-right: 1px solid #8a8886; }
.gbody { flex: 1; min-height: 0; display: flex; align-items: flex-start; }
.glabel { height: 16px; padding-top: 2px; display: flex; align-items: center; }
.glabel span { flex: 1; text-align: center; }
.glabel svg { width: 9px; height: 9px; margin-right: 3px; }
.stack { display: flex; flex-direction: column; }
.stack button, .stack label { height: 23px; display: flex; align-items: center; gap: 4px; }
.off { color: #b1b1b1; }
.big { height: 69px; line-height: 15px; text-align: center; display: flex; flex-direction: column; justify-content: flex-start; align-items: center; }
.big .pic { height: 38px; display: flex; align-items: center; justify-content: center; }
.big .car { margin-top: 5px; }
.press { background: #c5c5c5; box-shadow: inset 0 0 0 1px #8a8886; }
.w40 { width: 40px; }
.w42 { width: 42px; }
.w44 { width: 44px; }
.w50 { width: 50px; }
.w54 { width: 54px; }
.w56 { width: 56px; }
.w57 { width: 57px; }
.w68 { width: 68px; }
.w84 { width: 84px; }
.clip .gbody { padding: 0 14px 0 10px; gap: 5px; }
.font .gbody { padding: 8px 7px 0 8px; }
.para .gbody { padding: 8px 8px 0 6px; }
.styles .gbody { padding: 3px 10px 0 9px; }
.edit .stack { width: 92px; padding-left: 12px; }
.far .car { margin-left: 12px; }
.gview .gbody { padding: 0 14px 0 11px; }
.gview .stack { margin-left: 2px; }
.gmove .gbody { padding: 0 7px 0 8px; }
.gshow .gbody { padding: 0 14px 0 12px; }
.gzoom .gbody { padding: 0 14px 0 4px; }
.gwin .gbody { padding: 0 6px 0 5px; }
.gwin .stack { margin-right: 8px; }
.tall { width: 1px; height: 55px; background: #d2d0ce; margin: 7px 6px 0 3px; }
.abac { width: 14px; display: grid; font-size: 10px; line-height: 8px; }
.abac b + b { color: #3f7cbf; }
.abac b:first-child { color: #8a5ea8; }
.dot { width: 11px; height: 11px; border-radius: 50%; background: #ff9a0a; }
.gshow input { appearance: none; width: 13px; height: 13px; border: 1px solid #777; background: #fff; display: grid; place-items: center; }
.gshow input:checked::before { content: ""; width: 7px; height: 4px; border: solid #333; border-width: 0 0 1px 1px; transform: rotate(-45deg); margin-bottom: 2px; }

.rows { flex-direction: column; gap: 9px; }
.row { display: flex; align-items: center; height: 22px; }
.row button { width: 24px; height: 22px; display: flex; align-items: center; justify-content: center; }
.row .split { width: 39px; gap: 6px; }
.row .u { width: 37px; margin: 0 1px; font-size: 14px; font-weight: 700; color: #555; gap: 9px; }
.sep { width: 1px; height: 20px; background: #d2d0ce; margin: 0 3px 0 2px; }
.row select { appearance: none; height: 22px; border: 1px solid #ababab; padding-left: 2px; margin-right: 2px; background: linear-gradient(#777, #777) right 5px center / 5px 2px no-repeat #fff; color: #222; }
.row .fname { width: 107px; }
.row .fsize { width: 47px; }
.aa { font-size: 13px; color: #555; }
.row .wen { flex-direction: column; font-size: 10px; line-height: 10px; }
.wen b { color: #2f6eb5; }
.boxa { width: 16px; height: 16px; border: 1px solid #3f7cbf; line-height: 14px; font-size: 14px; text-align: center; }
.row .b { font-weight: 700; font-size: 14px; color: #555; }
.row .b.press { width: 22px; }
.b sub, .b sup { font-size: 8px; line-height: 8px; color: #2f6eb5; }
.b sub { align-self: flex-end; }
.b sup { align-self: flex-start; }
.row .it { font: italic 700 15px "Liberation Serif", serif; color: #555; }
.st { color: #555; }
.glow { width: 16px; text-align: center; font-size: 16px; color: #fff; -webkit-text-stroke: 1px #3f7cbf; text-shadow: 0 0 2px #7fb2e5; }
.hl { position: relative; width: 16px; height: 16px; line-height: 10px; font-size: 11px; }
.hl svg { position: absolute; inset: 0; }
.reda { width: 16px; height: 18px; line-height: 14px; font-weight: 700; font-size: 14px; text-align: center; border-bottom: 4px solid #e00; color: #555; }
.shade { width: 14px; height: 15px; line-height: 15px; background: #bdbdbd; font-weight: 700; font-size: 14px; }
.circ { width: 16px; height: 16px; line-height: 14px; border: 1px solid #666; border-radius: 50%; font-size: 10px; }

.gallery { height: 60px; display: flex; background: #fff; border: 1px solid #d2d0ce; padding: 0 1px; }
.gallery button { width: 72px; padding: 12px 7px 0; overflow: hidden; text-align: left; display: flex; flex-direction: column; justify-content: flex-start; align-items: stretch; }
.smp { display: block; height: 18px; line-height: 18px; overflow: hidden; color: #000; font-size: 12px; }
.gallery small { display: flex; align-items: center; justify-content: center; gap: 3px; height: 16px; margin-top: 5px; font-size: 12px; color: #666; }
.mini { width: 7px; height: 7px; }
.sans { font-family: "Liberation Sans", sans-serif; font-size: 13px; }
.song, .times, .large, .mid.smp { font-family: "Liberation Serif", serif; }
.song { font-size: 12px; }
.lite { color: #333; font-family: "Liberation Sans", sans-serif; }
.times { font-size: 13px; }
.large { font-size: 17px; }
.mid.smp { font-size: 15px; }
.heavy { font-family: "Open Sans", sans-serif; font-weight: 700; }
.more { width: 24px; height: 60px; border: 1px solid #8a8886; display: flex; flex-direction: column; align-items: center; justify-content: center; gap: 2px; }
.more i { width: 7px; height: 1px; background: #444; }
.collapse { margin: auto 5px 2px auto; }
.collapse svg { width: 11px; height: 7px; transform: scaleY(-1); }

.work { flex: 1; min-height: 0; display: flex; }
.nav { width: 351px; flex: none; display: flex; flex-direction: column; margin: 2px 0; border-right: 1px solid #bdbdbd; padding: 0 17px 0 16px; overflow: hidden; color: #3b3b3b; }
.navhead { height: 54px; flex: none; display: flex; align-items: center; gap: 28px; padding-bottom: 6px; }
.navhead h2 { font-size: 20px; line-height: 24px; margin-right: auto; color: #262626; }
.chev { width: 14px; height: 8px; }
.search { height: 26px; flex: none; display: flex; align-items: center; gap: 5px; padding: 0 3px 0 6px; background: #fff; border: 1px solid #ababab; color: #2b579a; }
.search input { flex: 1; min-width: 0; outline: 0; }
.search input::placeholder { color: #666; opacity: 1; }
.search .car { color: #444; width: 6px; }
.navtabs { height: 47px; flex: none; display: flex; gap: 18px; padding-top: 13px; }
.navtabs button { height: 30px; width: 25px; margin-right: 6px; padding-bottom: 4px; display: flex; align-items: center; }
.navtabs .on { color: #2b579a; font-weight: 700; border-bottom: 3px solid #2b579a; padding-bottom: 1px; }
.jump { height: 18px; flex: none; margin: 0 12px 0 15px; background: #c2d5f2; border: 1px solid #a0bce8; display: grid; place-items: center; }
.jump i { width: 7px; height: 7px; background: #444; clip-path: polygon(0 0, 100% 0, 100% 15%, 60% 15%, 100% 80%, 100% 100%, 0 100%, 0 80%, 40% 15%, 0 15%); }
.nav li { height: 21px; line-height: 20px; padding-left: 20px; white-space: nowrap; }
.nav .l2 { padding-left: 36px; }
.nav .l3 { padding-left: 52px; }
.open::before, .shut::before { content: ""; display: inline-block; width: 6px; height: 6px; margin: 0 9px 1px -15px; background: #444; clip-path: polygon(100% 0, 100% 100%, 0 100%); }
.shut::before { clip-path: polygon(0 0, 80% 50%, 0 100%, 0 85%, 55% 50%, 0 15%); }

.canvas { flex: 1; min-width: 0; display: flex; flex-direction: column; }
.view { flex: 1; min-height: 0; overflow: hidden; display: flex; justify-content: center; }
.gutter { width: 14px; }
.page { width: 1106px; background: #fff; border: solid #c6c6c6; border-width: 0 1px; color: #000; height: 100%; }
.page p { display: flex; align-items: center; white-space: nowrap; }
.ret { width: 16px; height: 14px; }
.ret.small { width: 12px; height: 11px; }
.ret.large { width: 28px; height: 24px; }
.bid { padding-top: 29px; font: 500 26px/50px "Liberation Serif", "Noto Sans CJK SC", serif; display: flex; flex-direction: column; }
.bid p { height: 51px; flex: none; padding-left: 182px; }
.bid .t { height: 50px; }
.bid .who { padding-left: 193px; }
.bid .in2 { padding-left: 222px; }
.bid .rep { padding-left: 187px; }
.bid .mid { padding-left: 555px; }
.bid .day { padding-left: 460px; }
.bid .in3 { padding-left: 398px; }
.bid em { font-style: normal; padding: 0 2px; }
.blank { position: relative; height: 28px; line-height: 24px; border-bottom: 1px solid #000; text-align: center; }
.name { width: 458px; padding-left: 14px; }
.sign { width: 144px; margin: 0 17px 0 3px; }
.ink { position: absolute; left: 15px; top: -24px; width: 125px; height: 80px; }
.ink path { fill: none; stroke: #222; stroke-width: 2; vector-effect: non-scaling-stroke; }
.dated { position: relative; }
.dated u { text-decoration-thickness: 1px; text-underline-offset: 5px; }
.frame { position: absolute; border: 4px solid #cf1322; }
.bid .frame { left: -5px; top: -8px; width: 243px; height: 67px; }
.bid footer { margin-top: auto; height: 44px; flex: none; display: flex; justify-content: space-between; padding: 0 96px 0 98px; line-height: 56px; font-size: 20px; color: #777; }
.bid footer span { display: flex; align-items: center; padding-left: 12px; }
.corner { width: 33px; height: 33px; border-top: 1px solid #ababab; }
.lc { border-right: 1px solid #ababab; }
.rc { border-left: 1px solid #ababab; }
.tender { padding-top: 6px; font: 22px/41px "Open Sans", "Noto Sans CJK SC", sans-serif; }
.tender p { height: 41px; padding-left: 130px; }
.tender .mid { padding-left: 582px; }
.tender h3 { display: flex; align-items: center; justify-content: center; height: 87px; padding: 8px 0 0 36px; font-size: 48px; line-height: 79px; }
.tender .t { height: 56px; padding-left: 328px; }
.tender .day { padding-left: 460px; }
.tender .frame { left: -22px; top: -16px; width: 280px; height: 81px; }

.hbar { height: 15px; flex: none; display: flex; margin: 1px 3px 1px 2px; background: #f3f3f3; }
.hbar button, .vbar button { width: 15px; height: 15px; background: #fff; border: 1px solid #8a8886; display: grid; place-items: center; }
.hbar .thumb { flex: 1; margin-right: 64px; background: #fff; border: 1px solid #8a8886; }
.vbar { width: 15px; flex: none; display: flex; flex-direction: column; margin: 2px 0 19px -1px; background: #f3f3f3; }
.vbar .thumb { height: 18px; margin: 1px 0 auto; background: #fff; border: 1px solid #8a8886; }
.hbar button::before, .vbar button::before { content: ""; width: 7px; height: 7px; background: #222; }
.hbar .le::before { clip-path: polygon(20% 50%, 80% 0, 80% 100%); }
.hbar .ri::before { clip-path: polygon(80% 50%, 20% 0, 20% 100%); }
.vbar .up::before { clip-path: polygon(50% 20%, 100% 80%, 0 80%); }
.vbar .dn::before { clip-path: polygon(50% 80%, 100% 20%, 0 20%); }

.status { height: 22px; flex: none; display: flex; align-items: center; padding-left: 14px; background: #f3f3f3; border-top: 1px solid #c6c6c6; white-space: nowrap; }
.status .s1 { width: 122px; }
.status .s2 { width: 82px; }
.status .s3 { margin-right: 18px; }
.status .s4 { width: 122px; }
.status .s5 { width: 74px; }
.status .s6 { margin: 0 auto 0 3px; font-weight: 600; }
.vw { width: 40px; height: 21px; display: grid; place-items: center; }
.vw.on { background: #c5c5c5; }
.zoom { width: 47px; text-align: right; padding-right: 6px; }

.taskbar { height: 40px; flex: none; display: flex; background: linear-gradient(90deg, #24343b 60%, #232a2e 80%, #1d2c36 90%); color: #fff; }
.taskbar button { width: 49px; display: flex; align-items: center; justify-content: center; }
.taskbar svg { width: 24px; height: 24px; }
.taskbar .hot { background: #a8672f; }
.taskbar .cur { background: #4d565c; }
.taskbar .xin { position: relative; color: #2f86d6; font-style: italic; font-size: 11px; }
.xin svg { position: absolute; left: 12px; top: 8px; }
.ps { width: 22px; height: 22px; border: 2px solid #31c5f0; border-radius: 4px; background: #001e36; font-weight: 600; line-height: 18px; text-align: center; }
.taskbar time { margin-left: auto; width: 76px; padding-top: 2px; text-align: center; line-height: 18px; }
```
